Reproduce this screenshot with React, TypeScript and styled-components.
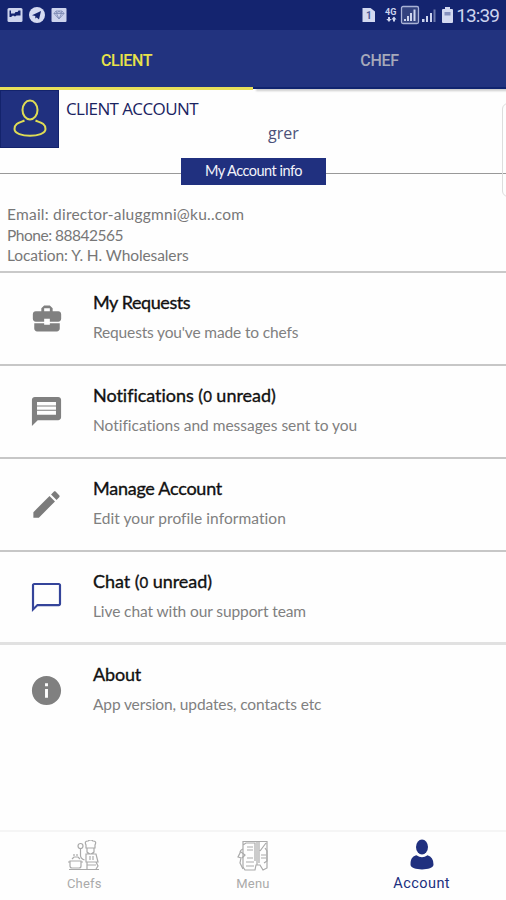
import React from "react";
import styled, { createGlobalStyle } from "styled-components";

const navy = "#20307f";

const GlobalStyle = createGlobalStyle`
  * { box-sizing: border-box; }
  body { margin: 0; background: #fff; }
`;

const Screen = styled.div`
  position: relative;
  width: 506px;
  height: 900px;
  overflow: hidden;
  display: flex;
  flex-direction: column;
  background: #fefefe;
  font-family: Lato, "Open Sans", sans-serif;
`;

const StatusBar = styled.header`
  height: 30px;
  flex: none;
  display: flex;
  align-items: center;
  justify-content: space-between;
  padding: 0 7px;
  background: #14246f;
  color: #cdd4ee;
`;

const StatusGroup = styled.div<{ $gap: number }>`
  display: flex;
  align-items: center;
  gap: ${(p) => p.$gap}px;
`;

const Clock = styled.span`
  font: 400 19px/30px Roboto, sans-serif;
  letter-spacing: -0.9px;
  padding-top: 2px;
`;

const Tabs = styled.nav`
  height: 60px;
  flex: none;
  display: flex;
  align-items: flex-start;
`;

const Tab = styled.div<{ $active?: boolean }>`
  flex: 1;
  height: ${(p) => (p.$active ? 60 : 59)}px;
  display: flex;
  align-items: center;
  justify-content: center;
  background: #22337f;
  border-bottom: ${(p) => (p.$active ? "3px solid #e9e05a" : "2px solid #10246f")};
  color: ${(p) => (p.$active ? "#e8e24a" : "#a6a9ba")};
  font: 500 16px/20px Roboto, sans-serif;
  letter-spacing: ${(p) => (p.$active ? -0.4 : -0.3)}px;
  padding-top: 4px;
  box-shadow: ${(p) => (p.$active ? "none" : "3px 2px 2px rgba(0, 0, 0, 0.2)")};
`;

const Profile = styled.section`
  height: 67px;
  flex: none;
  display: flex;
  align-items: flex-start;
`;

const Avatar = styled.div`
  width: 59px;
  height: 58px;
  display: flex;
  align-items: center;
  justify-content: center;
  background: ${navy};
  border: 1px solid #13236c;
`;

const ProfileText = styled.div`
  flex: 1;
  display: flex;
  flex-direction: column;
  padding: 7px 0 0 7px;
`;

const ProfileTitle = styled.h1`
  margin: 0;
  font: 400 17px/24px "Open Sans", sans-serif;
  letter-spacing: -0.6px;
  color: #1a2361;
`;

const ProfileName = styled.span`
  padding: 2px 0 0 202px;
  font: 400 16px/20px "Open Sans", sans-serif;
  color: #4c5179;
`;

const InfoDivider = styled.div`
  height: 28px;
  flex: none;
  display: flex;
  align-items: center;
  &::before, &::after {
    content: "";
    height: 1px;
    margin-top: 5px;
    background: #999;
  }
  &::before { width: 181px; }
  &::after { flex: 1; }
`;

const InfoBadge = styled.div`
  width: 145px;
  height: 27px;
  display: flex;
  align-items: center;
  justify-content: center;
  background: ${navy};
  color: #f2f3fa;
  font-size: 14.5px;
  letter-spacing: -0.5px;
  padding-bottom: 1px;
`;

const Details = styled.section`
  height: 88px;
  flex: none;
  padding: 19px 7px 0;
  border-bottom: 2px solid #c9c9c9;
`;

const Line = styled.div<{ $spacing: number }>`
  height: 20.7px;
  white-space: nowrap;
  font-size: 15.5px;
  line-height: 20.7px;
  letter-spacing: ${(p) => p.$spacing}px;
  color: #777;
`;

const Row = styled.section<{ $border: string }>`
  height: 93px;
  flex: none;
  display: flex;
  align-items: center;
  border-bottom: ${(p) => p.$border};
`;

const RowIcon = styled.div`
  width: 93px;
  display: flex;
  justify-content: center;
  svg { display: block; }
`;

const RowText = styled.div`
  flex: 1;
  padding-bottom: 3px;
`;

const RowTitle = styled.h2<{ $spacing: number }>`
  margin: 0;
  height: 28px;
  white-space: nowrap;
  font: 400 18px/28px Lato, sans-serif;
  -webkit-text-stroke: 0.35px #111;
  letter-spacing: ${(p) => p.$spacing}px;
  color: #111;
`;

const SmallDigit = styled.span`
  font-size: 15px;
  line-height: 1;
`;

const RowNote = styled.p<{ $spacing: number }>`
  margin: 0;
  padding-top: 2px;
  white-space: nowrap;
  font-size: 15.5px;
  line-height: 28px;
  letter-spacing: ${(p) => p.$spacing}px;
  color: #808080;
`;

const BottomNav = styled.nav`
  height: 70px;
  flex: none;
  margin-top: auto;
  display: flex;
  border-top: 2px solid #f5f5f5;
`;

const NavItem = styled.div<{ $active?: boolean }>`
  flex: 1;
  display: flex;
  flex-direction: column;
  align-items: center;
  padding-top: ${(p) => (p.$active ? 7 : 8)}px;
  color: ${(p) => (p.$active ? navy : "#aaa")};
  font: 400 ${(p) => (p.$active ? 14.5 : 13)}px/20px Roboto, sans-serif;
  letter-spacing: ${(p) => (p.$active ? 0.45 : 0.2)}px;
  svg { display: block; margin-bottom: ${(p) => (p.$active ? 4 : 2)}px; }
`;

const EdgeHandle = styled.div`
  position: absolute;
  top: 103px;
  right: -10px;
  width: 14px;
  height: 94px;
  border: 1px solid #ddd;
  border-radius: 6px;
`;

const PictureIcon = () => (
  <svg width="16" height="16" viewBox="0 0 16 16">
    <rect x="0.5" y="1" width="15" height="14" rx="1.5" fill="#cdd4ee" />
    <path d="M2.500 3.500h1.500v3h3.500l1-1.500h2l1-1.500h2v5h-4l-1.500 1-2-1-2 1.500h-1.500z" fill="#14246f" />
  </svg>
);

const TelegramIcon = () => (
  <svg width="16" height="16" viewBox="0 0 16 16">
    <circle cx="8" cy="8" r="8" fill="#d5dbf1" />
    <path d="M3 8.2 12 4l-2 8.6-2.3-2.2-1.4 1V9z" fill="#14246f" />
  </svg>
);

const GemIcon = () => (
  <svg width="16" height="16" viewBox="0 0 16 16">
    <rect x="0.5" y="1" width="15" height="14" rx="1" fill="#cdd4ee" />
    <path d="M3 6.5 5 4h6l2 2.5L8 12zM3 6.5h10M5.5 6.5 8 12l2.5-5.5M5 4l1 2.5L8 4l2 2.5L11 4" fill="none" stroke="#7f8cb5" strokeWidth="0.9" />
  </svg>
);

const SignalIcons = () => (
  <svg width="78" height="22" viewBox="0 0 78 22">
    <path d="M1.500 4h8L14 7.500V18H1.500z" fill="#d3d9f0" />
    <text x="5" y="15" fontFamily="Roboto, sans-serif" fontSize="10" fontWeight="700" fill="#4c5a94">1</text>
    <text x="24" y="11" fontFamily="Roboto, sans-serif" fontSize="9" fontWeight="700" fill="#cdd4ee">4G</text>
    <path d="M28 18l-2.700-3h1.700v-2h2v2h1.500zM33 12.500l2.500 3h-1.500v2h-2v-2h-1.700z" fill="#cdd4ee" />
    <rect x="40.500" y="2.500" width="17" height="17" rx="1.500" fill="#33427f" stroke="#a9b2d6" strokeWidth="1.300" />
    <path d="M43 15h2v2h-2zM46 12h2v5h-2zM49 9h2v8h-2zM52.500 5.500h2v11.500h-2z" fill="#cdd4ee" />
    <path d="M61 15h2.500v3H61zM65 12h2v6h-2zM69 9h2v9h-2z" fill="#cdd4ee" />
    <path d="M72.500 5.500h2V18h-2z" fill="#6c78aa" />
  </svg>
);

const BatteryIcon = () => (
  <svg width="11" height="16" viewBox="0 0 11 16">
    <path d="M3 0h5v2h2q1 0 1 1v12q0 1-1 1H1q-1 0-1-1V3q0-1 1-1h2z" fill="#d3d9f0" />
    <path d="M2.500 5h6v3.500h-6z" fill="#8590bd" />
  </svg>
);

const AvatarIcon = () => (
  <svg width="34" height="40" viewBox="0 0 34 40" fill="none" stroke="#dfdc55" strokeWidth="2">
    <ellipse cx="17" cy="11" rx="7.500" ry="9.500" />
    <path d="M11.500 21.500C7 23.500 1.500 24 1.500 30c0 9 31 9 31 0 0-6-5.500-6.500-10-8.500" />
  </svg>
);

const BriefcaseIcon = () => (
  <svg width="34" height="35" viewBox="0 0 24 24" fill="#808080">
    <path transform="translate(0 -0.400) scale(1 1.050)" d="M10 16v-1H3.010L3 18.500c0 1.110.890 2 2 2h14c1.110 0 2-.890 2-2V15h-7v1h-4zm10-9h-4.010V5l-2-2h-4l-2 2v2H4c-1.100 0-2 .900-2 2v3c0 1.110.890 2 2 2h6v-2h4v2h6c1.100 0 2-.900 2-2V9c0-1.100-.900-2-2-2zm-6 0h-4V5h4v2z" />
  </svg>
);

const MessageIcon = () => (
  <svg width="35" height="35" viewBox="0 0 24 24" fill="#808080">
    <path d="M20 2H4c-1.100 0-1.990.900-1.990 2L2 22l4-4h14c1.100 0 2-.900 2-2V4c0-1.100-.900-2-2-2zM5.500 5.500h13v2.300h-13zM5.500 8.500h13v2.300h-13zM5.500 11.500h13v2.700h-13z" />
  </svg>
);

const PencilIcon = () => (
  <svg width="35" height="35" viewBox="0 0 24 24" fill="#7b7b7b">
    <path d="M3 17.250V21h3.750L17.810 9.940l-3.750-3.750L3 17.250zM20.710 7.040c.390-.390.390-1.020 0-1.410l-2.340-2.340c-.390-.390-1.020-.390-1.410 0l-1.830 1.830 3.750 3.750 1.830-1.830z" />
  </svg>
);

const ChatIcon = () => (
  <svg width="35" height="35" viewBox="0 0 24 24" fill="#34449a">
    <path d="M20.500 2H3.500C2.700 2 2 2.700 2 3.500V22l4-4h14.500c.8 0 1.500-.7 1.500-1.500v-13c0-.8-.7-1.500-1.500-1.500zm0 14.500H5.500l-2 2V3.500h17z" />
  </svg>
);

const InfoIcon = () => (
  <svg width="35" height="35" viewBox="0 0 24 24" fill="#808080">
    <path d="M12 2C6.480 2 2 6.480 2 12s4.480 10 10 10 10-4.480 10-10S17.520 2 12 2zm1 15h-2v-6h2v6zm0-8h-2V7h2v2z" />
  </svg>
);

const ChefIcon = () => (
  <svg width="32" height="32" viewBox="0 0 32 32" fill="none" stroke="#a9a9a9" strokeWidth="1.200">
    <path d="M1 29.500h30M2 21h11v5q0 2-2 2H4q-2 0-2-2zM0 22h2M13 22h2M4 19l2-2h4l2 2M6 16v-2M9 16v-2" />
    <circle cx="12.500" cy="6" r="2.500" />
    <path d="M12.500 8.500v7q0 3 4 4.500M18 8V5q-2-4 2-4 3-2 5 0 4 0 2 4v3zM19 8v4q3.500 4 7 0V8M18 14h10l2 8h-12zM19 22v7M28 22l2 4-2 3M19 25h9M22 16v4M25 16v4" />
  </svg>
);

const MenuIcon = () => (
  <svg width="32" height="32" viewBox="0 0 32 32" fill="none" stroke="#aaa" strokeWidth="1.200">
    <path d="M6 1.500h24V28l-4 2-3-5h-4l-1 5H8l-2-3zM20 2v23M22 2v21M6 5l3-2h9v18M29 3l-6 8M24 15h5M24 18h5M10 7h6M10 10h6M10 18h6M9 22h8M9 26h8" />
    <path d="M6 9q-3 1-3 4l-2 4 3 1-1 5 3 6M4 12l4 3-3 3M28 8l2 3v10l-3 2" />
  </svg>
);

const UserIcon = () => (
  <svg width="24" height="31" viewBox="0 0 24 31" fill={navy}>
    <ellipse cx="12" cy="8" rx="6" ry="7.500" />
    <path d="M6.500 16.200q5.500 4 11 0Q23.500 18 23.500 25.500C23.500 32 .500 32 .500 25.500.500 18 4 17 6.500 16.200z" />
  </svg>
);

const rule = "2px solid #c7c7c7";

const rows = [
  { icon: <BriefcaseIcon />, title: "My Requests", ts: -0.42, note: "Requests you've made to chefs", ns: -0.15, border: rule },
  { icon: <MessageIcon />, title: "Notifications (0 unread)", ts: -0.03, note: "Notifications and messages sent to you", ns: -0.02, border: rule },
  { icon: <PencilIcon />, title: "Manage Account", ts: -0.25, note: "Edit your profile information", ns: 0.06, border: rule },
  { icon: <ChatIcon />, title: "Chat (0 unread)", ts: -0.05, note: "Live chat with our support team", ns: -0.1, border: "3px solid #e1e1e1" },
  { icon: <InfoIcon />, title: "About", ts: -0.15, note: "App version, updates, contacts etc", ns: -0.12, border: "3px solid transparent" },
];

const renderTitle = (title: string) =>
  title.split("0").map((part, i) => (
    <React.Fragment key={i}>
      {i > 0 && <SmallDigit>0</SmallDigit>}
      {part}
    </React.Fragment>
  ));

export default function App() {
  return (
    <Screen>
      <GlobalStyle />
      <StatusBar>
        <StatusGroup $gap={6}>
          <PictureIcon />
          <TelegramIcon />
          <GemIcon />
        </StatusGroup>
        <StatusGroup $gap={3}>
          <SignalIcons />
          <BatteryIcon />
          <Clock>13:39</Clock>
        </StatusGroup>
      </StatusBar>
      <Tabs>
        <Tab $active>CLIENT</Tab>
        <Tab>CHEF</Tab>
      </Tabs>
      <Profile>
        <Avatar><AvatarIcon /></Avatar>
        <ProfileText>
          <ProfileTitle>CLIENT ACCOUNT</ProfileTitle>
          <ProfileName>grer</ProfileName>
        </ProfileText>
      </Profile>
      <InfoDivider>
        <InfoBadge>My Account info</InfoBadge>
      </InfoDivider>
      <Details>
        <Line $spacing={0.23}>Email: director-aluggmni@ku..com</Line>
        <Line $spacing={-0.48}>Phone: 88842565</Line>
        <Line $spacing={-0.1}>Location: Y. H. Wholesalers</Line>
      </Details>
      {rows.map((row) => (
        <Row key={row.title} $border={row.border}>
          <RowIcon>{row.icon}</RowIcon>
          <RowText>
            <RowTitle $spacing={row.ts}>{renderTitle(row.title)}</RowTitle>
            <RowNote $spacing={row.ns}>{row.note}</RowNote>
          </RowText>
        </Row>
      ))}
      <BottomNav>
        <NavItem><ChefIcon />Chefs</NavItem>
        <NavItem><MenuIcon />Menu</NavItem>
        <NavItem $active><UserIcon />Account</NavItem>
      </BottomNav>
      <EdgeHandle />
    </Screen>
  );
}
